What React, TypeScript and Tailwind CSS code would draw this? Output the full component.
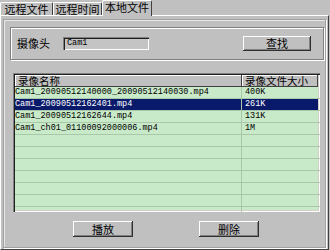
import React from "react";

const mono = "font-['Liberation_Mono',monospace] text-[8.5px] leading-[11px]";
const cjk = "font-['SimSun','Noto_Sans_CJK_SC',sans-serif] text-[11px] leading-[11px]";
const cjkH = "font-['SimSun','Noto_Sans_CJK_SC',sans-serif] text-[10.5px] leading-[10px]";

function Btn({ label }: { label: string }) {
  return (
    <div
      className={`w-[60px] h-[16px] flex items-center justify-center bg-[#c0c0c0] text-black ${cjk} shadow-[inset_-1px_-1px_0_#303030,inset_1px_1px_0_#ffffff,inset_-2px_-2px_0_#808080]`}
    >
      {label}
    </div>
  );
}

export default function App() {
  const rows: [string, string][] = [
    ["Cam1_20090512140000_20090512140030.mp4", "400K"],
    ["Cam1_20090512162401.mp4", "261K"],
    ["Cam1_20090512162644.mp4", "131K"],
    ["Cam1_ch01_01100092000006.mp4", "1M"],
  ];
  const empties = Array.from({ length: 7 });
  return (
    <div className="w-[330px] h-[250px] bg-[#c0c0c0] overflow-hidden flex flex-col">
      {/* tabs */}
      <div className="h-[15px] flex items-end relative z-10">
        <div className={`w-[53px] h-[13px] flex items-center justify-center text-black ${cjk} border-t border-l border-white border-r border-r-[#404040] rounded-t-[2px]`}>
          远程文件
        </div>
        <div className={`w-[49px] h-[13px] flex items-center justify-center text-black ${cjk} border-t border-l border-white border-r border-r-[#404040] rounded-t-[2px]`}>
          远程时间
        </div>
        <div className={`w-[50px] h-[16px] -mb-px pb-[2px] flex items-center justify-center text-black bg-[#c0c0c0] ${cjk} border-t border-l border-white border-r border-r-[#404040] rounded-t-[2px]`}>
          本地文件
        </div>
      </div>
      {/* panel */}
      <div className="w-[329px] flex-1 border-t border-l border-white border-r border-r-[#404040] border-b border-b-[#404040] pt-[3px] pl-[2px]">
        <div className="w-[323px] h-[229px] border border-[#a0a0a0] shadow-[inset_1px_1px_0_#e8e8e8,1px_1px_0_#ffffff] flex flex-col pl-[4px]">
          {/* group box */}
          <div className="mt-[7px] ml-[2px] w-[314px] h-[33px] border border-[#808080] shadow-[inset_1px_1px_0_#ffffff,1px_1px_0_#ffffff] flex items-center pl-[6px]">
            <div className={`w-[46px] text-black ${cjk}`}>摄像头</div>
            <div className={`w-[86px] h-[13px] bg-[#c4c4c4] flex items-center pl-[4px] text-black ${mono} shadow-[inset_1px_1px_0_#808080,inset_2px_2px_0_#202020,inset_-1px_-1px_0_#ffffff]`}>
              Cam1
            </div>
            <div
              className={`ml-[94px] w-[68px] h-[15px] flex items-center justify-center text-black ${cjk} shadow-[inset_-1px_-1px_0_#303030,inset_1px_1px_0_#ffffff,inset_-2px_-2px_0_#808080]`}
            >
              查找
            </div>
          </div>
          {/* list */}
          <div className="mt-[13px] ml-[5px] w-[307px] h-[139px] bg-[#c9eac9] shadow-[inset_1px_1px_0_#808080,inset_2px_2px_0_#202020,inset_-1px_-1px_0_#ffffff,inset_-2px_-2px_0_#d4d0c8] pt-[2px] pl-[2px] overflow-hidden flex flex-col">
            <div className="flex h-[12px] shrink-0">
              <div className={`w-[227px] h-full flex items-center pl-[3px] bg-[#c0c0c0] text-black ${cjkH} shadow-[inset_-1px_-1px_0_#404040,inset_1px_1px_0_#ffffff]`}>
                录像名称
              </div>
              <div className={`w-[76px] h-full flex items-center pl-[3px] bg-[#c0c0c0] text-black ${cjkH} shadow-[inset_-1px_-1px_0_#404040,inset_1px_1px_0_#ffffff]`}>
                录像文件大小
              </div>
            </div>
            {rows.map(([name, size], i) => {
              const sel = i === 1;
              return (
                <div key={i} className="flex h-[12px] shrink-0 border-b border-[#a9c8a9]">
                  <div className={`w-[227px] h-full flex items-center pl-0 border-r border-[#a9c8a9] ${mono} ${sel ? "bg-[#0a1a6a] text-white" : "text-black"}`}>
                    {name}
                  </div>
                  <div className={`w-[76px] h-full flex items-center pl-[3px] ${mono} ${sel ? "bg-[#0a1a6a] text-white" : "text-black"}`}>
                    {size}
                  </div>
                </div>
              );
            })}
            {empties.map((_, i) => (
              <div key={"e" + i} className="flex h-[12px] shrink-0 border-b border-[#a9c8a9]">
                <div className="w-[227px] h-full border-r border-[#a9c8a9]" />
                <div className="w-[76px] h-full" />
              </div>
            ))}
          </div>
          {/* buttons */}
          <div className="mt-[9px] ml-[65px] flex gap-[66px]">
            <Btn label="播放" />
            <Btn label="删除" />
          </div>
        </div>
      </div>
    </div>
  );
}
